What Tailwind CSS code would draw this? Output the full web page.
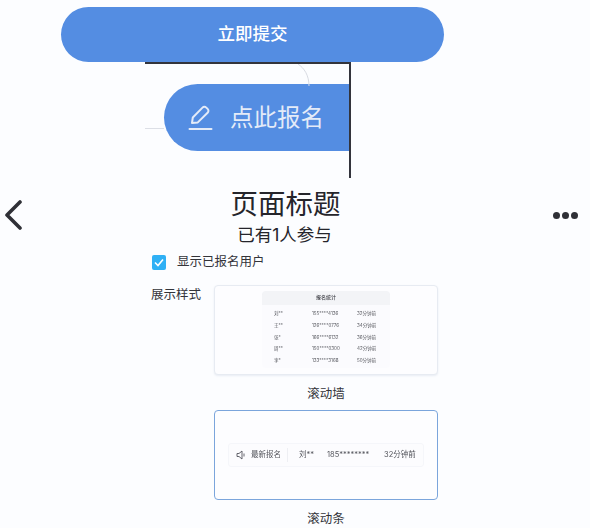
<!DOCTYPE html>
<html lang="zh">
<head>
    <meta charset="UTF-8">
    <meta name="viewport" content="width=device-width, initial-scale=1.0">
    <title>页面标题</title>
    <script src="https://cdn.jsdelivr.net/npm/@tailwindcss/browser@4"></script>
</head>
<body class="w-[590px] h-[528px] overflow-hidden bg-[#fcfdff] text-[#25252b] font-['Inter','Noto_Sans_CJK_SC',sans-serif]">
    <!-- top button -->
    <div class="pt-[7px] pl-[61px]">
        <button class="w-[383px] h-[55px] rounded-[28px] bg-[#548de2] text-white text-[17.5px] font-medium flex items-center justify-center">立即提交</button>
    </div>

    <!-- cropped floating entry -->
    <div class="relative ml-[145px] w-[206px] h-[116px] border-t-2 border-r-2 border-[#33343c]">
        <svg class="absolute left-[153px] top-0" width="12" height="22" fill="none" stroke="#d8dbe2"><path d="M0 0 C6 4 11 11 11 22"/></svg>
        <div class="absolute left-0 top-[64px] w-[19px] h-px bg-[#dcdfe6]"></div>
        <div class="mt-[20px] ml-[19px] w-[185px] h-[67px] rounded-l-[34px] bg-[#548de2] text-[#e4ebf8] flex items-center pl-[24px] gap-[17px]">
            <svg width="25" height="26" viewBox="0 0 25 26" fill="none" stroke="currentColor" stroke-width="2" stroke-linejoin="round" stroke-linecap="round">
                <path d="M4 18 L4.8 12.5 L14.5 2.6 C15.6 1.5 17.2 1.5 18.3 2.6 L19.6 3.9 C20.7 5 20.7 6.6 19.6 7.7 L9.8 17.4 Z"/>
                <path d="M1.5 24 H23.5"/>
            </svg>
            <span class="text-[23.5px] leading-none">点此报名</span>
        </div>
    </div>

    <!-- title bar -->
    <div class="flex items-center justify-between pl-[4px] pr-[12px] h-[78px] -mt-[2px]">
        <svg width="18" height="30" viewBox="0 0 18 30" fill="none" stroke="#2f3036" stroke-width="3.6" stroke-linecap="round" stroke-linejoin="round"><path d="M16 2 L3 15 L16 28"/></svg>
        <div class="flex flex-col items-center -ml-[4px] pt-[3px]">
            <h1 class="text-[27.5px] leading-[36px]">页面标题</h1>
            <p class="text-[17.5px] leading-[24px] mt-[1px] -ml-[2px]">已有1人参与</p>
        </div>
        <div class="flex gap-[2px]">
            <span class="w-[7px] h-[7px] rounded-full bg-[#2f3036]"></span>
            <span class="w-[7px] h-[7px] rounded-full bg-[#2f3036]"></span>
            <span class="w-[7px] h-[7px] rounded-full bg-[#2f3036]"></span>
        </div>
    </div>

    <!-- settings -->
    <div class="pl-[152px]">
        <label class="flex items-center gap-[11px] h-[18px] -mt-[1px]">
            <span class="w-[14px] h-[15px] rounded-[2px] bg-[#2fb0f5] flex items-center justify-center">
                <svg width="10" height="9" viewBox="0 0 10 9" fill="none" stroke="white" stroke-width="1.6"><path d="M1 4.5 L4 7.5 L9 1.5"/></svg>
            </span>
            <span class="text-[12.5px] pt-[1px] text-[#33343a]">显示已报名用户</span>
        </label>

        <div class="flex mt-[14px]">
            <span class="w-[63px] -ml-[1px] pt-[1px] text-[12.5px] leading-[18px] text-[#33343a]">展示样式</span>
            <div class="flex flex-col items-center w-[224px]">
                <!-- wall preview -->
                <div class="w-full h-[90px] rounded-[4px] border border-[#e7ebf2] bg-[#fdfdff] flex justify-center pt-[5px] shadow-[0_1px_2px_rgba(180,190,210,0.25)]">
                    <div class="w-[128px] h-[77px] rounded-[4px] bg-[#fbfbfe] text-[4.5px] text-[#55565d] blur-[0.3px]">
                        <div class="h-[14px] rounded-t-[4px] bg-[#f3f4f7] flex items-center justify-center text-[5px] text-[#3d3e45] font-medium">报名统计</div>
                        <div class="grid grid-cols-[38px_45px_auto] pl-[12px] pt-[4px] auto-rows-[11.6px] items-center">
                            <span>刘**</span><span>155****4136</span><span>32分钟前</span>
                            <span>王**</span><span>126****0776</span><span>34分钟前</span>
                            <span>张*</span><span>166****6132</span><span>36分钟前</span>
                            <span>周**</span><span>150****0300</span><span>42分钟前</span>
                            <span>李*</span><span>133****3168</span><span>50分钟前</span>
                        </div>
                    </div>
                </div>
                <span class="text-[12.5px] leading-[18px] mt-[10px] text-[#33343a]">滚动墙</span>

                <!-- bar preview -->
                <div class="w-full h-[90px] mt-[7px] rounded-[4px] border-[1.5px] border-[#7ba5dc] bg-[#fdfdff] flex items-center justify-center">
                    <div class="w-[196px] h-[24px] rounded-[3px] bg-[#fcfcfe] border border-[#f5f6fa] flex items-center pl-[7px] text-[7.5px] text-[#55565d] blur-[0.2px]">
                        <svg width="11" height="10" viewBox="0 0 11 10" fill="none" stroke="#55565d" stroke-width="0.9"><path d="M1 3.5 H3 L6 1 V9 L3 6.5 H1 Z M8 3.5 V6.5"/></svg>
                        <span class="ml-[4px] w-[37px] h-[14px] leading-[14px] border-r border-[#eeeff3]">最新报名</span>
                        <span class="ml-[11px] w-[28px]">刘**</span>
                        <span class="w-[57px]">185********</span>
                        <span>32分钟前</span>
                    </div>
                </div>
                <span class="text-[12.5px] leading-[18px] mt-[10px] text-[#33343a]">滚动条</span>
            </div>
        </div>
    </div>
</body>
</html>
